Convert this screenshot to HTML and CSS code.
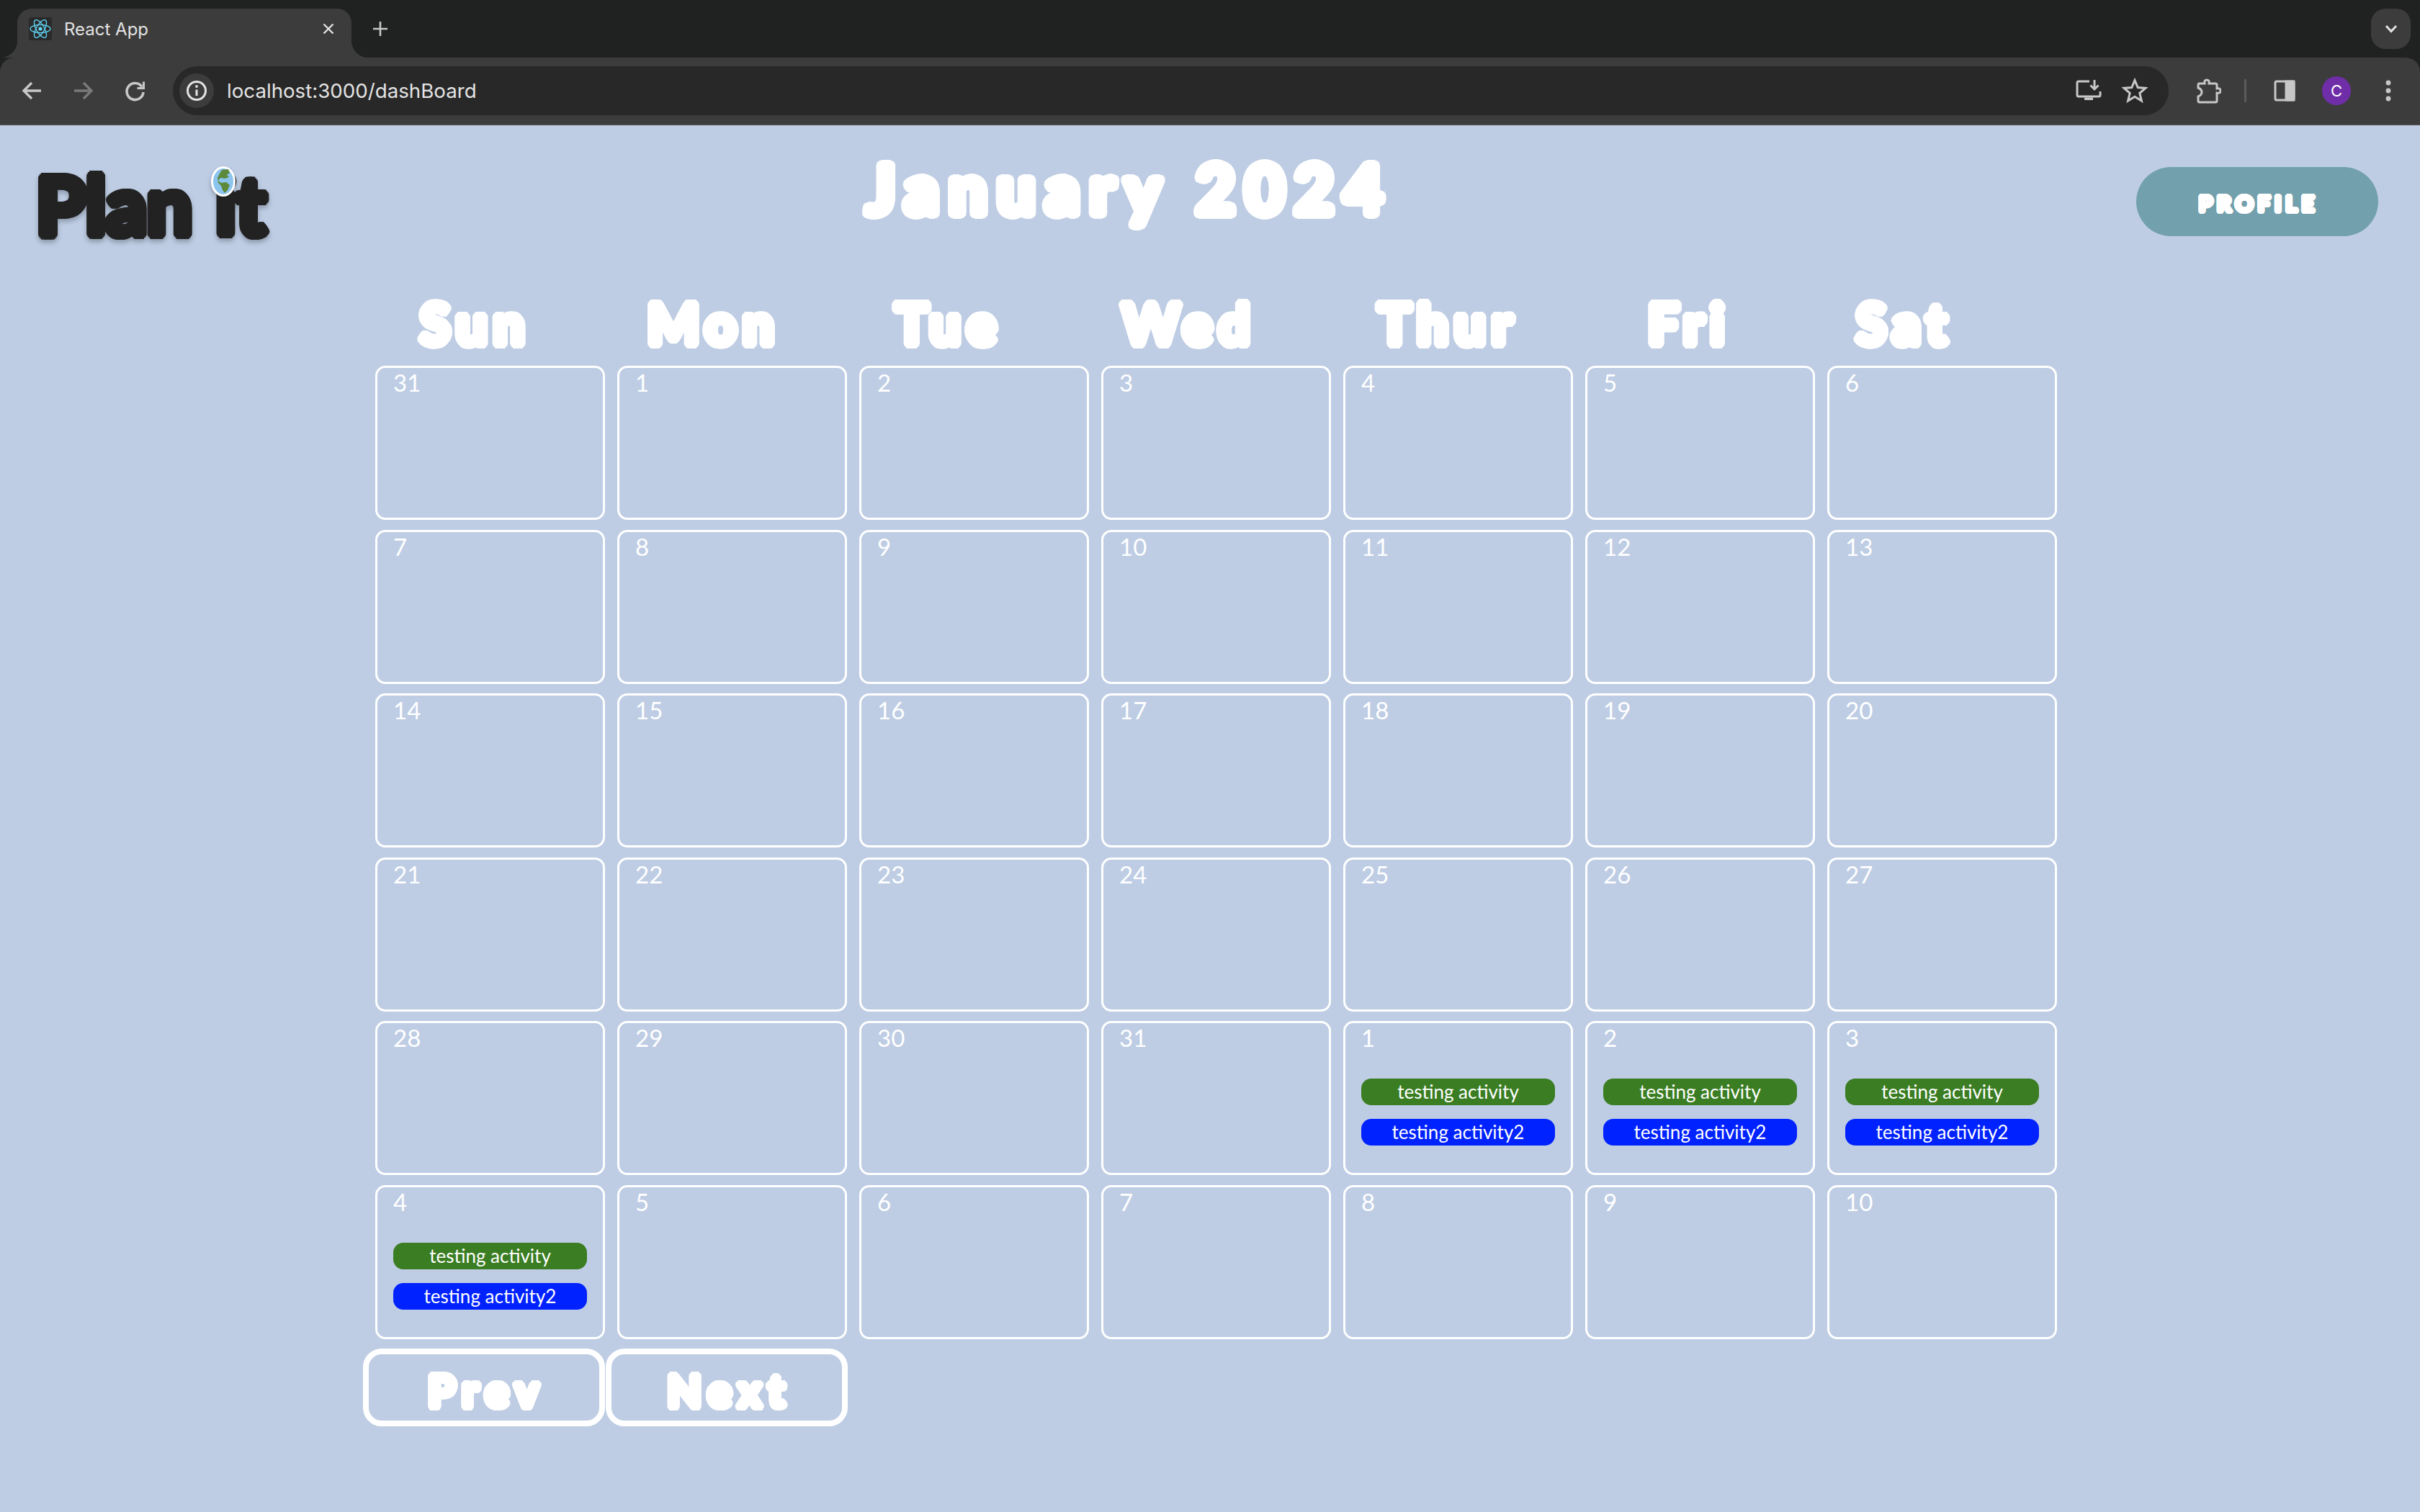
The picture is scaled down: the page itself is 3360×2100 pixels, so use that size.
FILE: index.html
```html
<!DOCTYPE html>
<html lang="en">

<head>
    <meta charset="UTF-8">
    <meta name="viewport" content="width=device-width, initial-scale=1.0">
    <title>React App</title>
    <link rel="stylesheet" href="styles.css">
</head>

<body>
    <div class="browser">
        <div class="tab-strip">
            <div class="tab">
                <span class="favicon">
                    <svg width="32" height="32" viewBox="0 0 32 32" fill="none" stroke="#61dafb" stroke-width="1.3">
                        <ellipse cx="16" cy="16" rx="14" ry="5.6"/>
                        <ellipse cx="16" cy="16" rx="14" ry="5.6" transform="rotate(60 16 16)"/>
                        <ellipse cx="16" cy="16" rx="14" ry="5.6" transform="rotate(120 16 16)"/>
                        <circle cx="16" cy="16" r="2.6" fill="#61dafb" stroke="none"/>
                    </svg>
                </span>
                <span class="tab-title">React App</span>
                <svg class="tab-close" width="16" height="16" viewBox="0 0 16 16" fill="none" stroke="#e3e3e3" stroke-width="2.4">
                    <path d="M1.5 1.5L14.5 14.5M14.5 1.5L1.5 14.5"/>
                </svg>
            </div>
            <svg class="new-tab" width="24" height="24" viewBox="0 0 24 24" fill="none" stroke="#c7c7c7" stroke-width="2.6">
                <path d="M12 2V22M2 12H22"/>
            </svg>
            <div class="tab-search">
                <svg width="20" height="14" viewBox="0 0 20 14" fill="none" stroke="#e3e3e3" stroke-width="3">
                    <path d="M3 3L10 10.5L17 3"/>
                </svg>
            </div>
        </div>
        <div class="toolbar">
            <span class="tool">
                <svg width="32" height="32" viewBox="0 0 32 32" fill="none" stroke="#c7c7c7" stroke-width="3.4">
                    <path d="M29 16H6M16 5L5 16L16 27"/>
                </svg>
            </span>
            <span class="tool">
                <svg width="32" height="32" viewBox="0 0 32 32" fill="none" stroke="#7a7a7a" stroke-width="3.4">
                    <path d="M3 16H26M16 5L27 16L16 27"/>
                </svg>
            </span>
            <span class="tool">
                <svg width="32" height="32" viewBox="0 0 32 32" fill="none" stroke="#c7c7c7" stroke-width="3.6">
                    <path d="M25 10.5A11.5 11.5 0 1 0 27 18"/>
                    <path d="M27.5 3.5V12.5H18.5" stroke-width="3"/>
                </svg>
            </span>
            <div class="omnibox">
                <span class="site-info">
                    <svg width="32" height="32" viewBox="0 0 32 32" fill="none" stroke="#e3e3e3" stroke-width="3">
                        <circle cx="16" cy="16" r="12.5"/>
                        <path d="M16 14.5V23"/>
                        <circle cx="16" cy="10" r="1.9" fill="#e3e3e3" stroke="none"/>
                    </svg>
                </span>
                <span class="url">localhost:3000/dashBoard</span>
                <span class="omni-icon">
                    <svg width="36" height="32" viewBox="0 0 36 32" fill="none" stroke="#c7c7c7" stroke-width="3">
                        <path d="M19 3H4Q2 3 2 5V22Q2 24 4 24H32Q34 24 34 22V17"/>
                        <path d="M12 25.5H24V29H12Z" fill="#c7c7c7" stroke="none"/>
                        <path d="M26 1V13M20.5 8.5L26 14L31.5 8.5"/>
                    </svg>
                </span>
                <span class="omni-icon">
                    <svg width="36" height="36" viewBox="0 0 36 36" fill="none" stroke="#c7c7c7" stroke-width="3">
                        <path d="M18 3.5L22.2 13.6L33 14.4L24.8 21.4L27.4 32L18 26.3L8.6 32L11.2 21.4L3 14.4L13.8 13.6Z"/>
                    </svg>
                </span>
            </div>
            <span class="tool puzzle">
                <svg width="36" height="36" viewBox="0 0 36 36" fill="none" stroke="#c7c7c7" stroke-width="3">
                    <path d="M4 8H13Q12 3 16 3Q20 3 19 8H28Q30 8 30 10V15Q35 14 35 18Q35 22 30 21V32Q30 34 28 34H6Q4 34 4 32V26Q9 24 9 20Q9 16 4 14V10Q4 8 6 8"/>
                </svg>
            </span>
            <span class="divider"></span>
            <span class="tool">
                <svg width="30" height="30" viewBox="0 0 30 30" fill="none" stroke="#c7c7c7" stroke-width="3">
                    <rect x="2" y="2" width="26" height="26" rx="2"/>
                    <rect x="17" y="2" width="11" height="26" fill="#c7c7c7"/>
                </svg>
            </span>
            <span class="tool">
                <span class="avatar">C</span>
            </span>
            <span class="tool">
                <svg width="8" height="30" viewBox="0 0 8 30" fill="#c7c7c7">
                    <circle cx="4" cy="4" r="3.4"/>
                    <circle cx="4" cy="15" r="3.4"/>
                    <circle cx="4" cy="26" r="3.4"/>
                </svg>
            </span>
        </div>
    </div>

    <div class="page">
        <div class="top-bar">
            <div class="logo bubble">
                Plan it
                <svg class="globe" width="34" height="42" viewBox="0 0 34 42">
                    <ellipse cx="17" cy="21" rx="15.5" ry="19.5" fill="#8cc4ee" stroke="#fff" stroke-width="3"/>
                    <path d="M15 5L24 4L26 9L22 12L25 15L19 17L13 16L10 20L14 23L21 22L26 26L23 33L19 37L16 33L14 27L10 23L9 16L12 10Z" fill="#5d8a3a"/>
                </svg>
            </div>
            <h1 class="month-title bubble">January 2024</h1>
            <button class="profile-btn bubble">PROFILE</button>
        </div>

        <div class="calendar">
            <div class="weekdays bubble">
                <span>Sun</span>
                <span>Mon</span>
                <span>Tue</span>
                <span>Wed</span>
                <span>Thur</span>
                <span>Fri</span>
                <span>Sat</span>
            </div>

            <div class="days">
                <div class="day"><span class="day-num">31</span></div>
                <div class="day"><span class="day-num">1</span></div>
                <div class="day"><span class="day-num">2</span></div>
                <div class="day"><span class="day-num">3</span></div>
                <div class="day"><span class="day-num">4</span></div>
                <div class="day"><span class="day-num">5</span></div>
                <div class="day"><span class="day-num">6</span></div>

                <div class="day"><span class="day-num">7</span></div>
                <div class="day"><span class="day-num">8</span></div>
                <div class="day"><span class="day-num">9</span></div>
                <div class="day"><span class="day-num">10</span></div>
                <div class="day"><span class="day-num">11</span></div>
                <div class="day"><span class="day-num">12</span></div>
                <div class="day"><span class="day-num">13</span></div>

                <div class="day"><span class="day-num">14</span></div>
                <div class="day"><span class="day-num">15</span></div>
                <div class="day"><span class="day-num">16</span></div>
                <div class="day"><span class="day-num">17</span></div>
                <div class="day"><span class="day-num">18</span></div>
                <div class="day"><span class="day-num">19</span></div>
                <div class="day"><span class="day-num">20</span></div>

                <div class="day"><span class="day-num">21</span></div>
                <div class="day"><span class="day-num">22</span></div>
                <div class="day"><span class="day-num">23</span></div>
                <div class="day"><span class="day-num">24</span></div>
                <div class="day"><span class="day-num">25</span></div>
                <div class="day"><span class="day-num">26</span></div>
                <div class="day"><span class="day-num">27</span></div>

                <div class="day"><span class="day-num">28</span></div>
                <div class="day"><span class="day-num">29</span></div>
                <div class="day"><span class="day-num">30</span></div>
                <div class="day"><span class="day-num">31</span></div>
                <div class="day">
                    <span class="day-num">1</span>
                    <div class="activity green">testing activity</div>
                    <div class="activity blue">testing activity2</div>
                </div>
                <div class="day">
                    <span class="day-num">2</span>
                    <div class="activity green">testing activity</div>
                    <div class="activity blue">testing activity2</div>
                </div>
                <div class="day">
                    <span class="day-num">3</span>
                    <div class="activity green">testing activity</div>
                    <div class="activity blue">testing activity2</div>
                </div>

                <div class="day">
                    <span class="day-num">4</span>
                    <div class="activity green">testing activity</div>
                    <div class="activity blue">testing activity2</div>
                </div>
                <div class="day"><span class="day-num">5</span></div>
                <div class="day"><span class="day-num">6</span></div>
                <div class="day"><span class="day-num">7</span></div>
                <div class="day"><span class="day-num">8</span></div>
                <div class="day"><span class="day-num">9</span></div>
                <div class="day"><span class="day-num">10</span></div>
            </div>

            <div class="month-nav">
                <button class="nav-btn bubble">Prev</button>
                <button class="nav-btn bubble">Next</button>
            </div>
        </div>
    </div>
</body>

</html>
```

FILE: styles.css
```css
body {
    margin: 0;
    height: 2100px;
    overflow: hidden;
    background-color: #becde4;
    font-family: "Lato", sans-serif;
    color: white;
}

/* browser chrome */

.browser {
    background-color: #202221;
    font-family: "Inter", sans-serif;
}

.tab-strip {
    display: flex;
    align-items: flex-start;
    height: 80px;
}

.tab {
    position: relative;
    display: flex;
    align-items: center;
    box-sizing: border-box;
    width: 464px;
    height: 68px;
    margin: 12px 0 0 24px;
    padding: 0 24px 12px 16px;
    background-color: #3c3c3c;
    border-radius: 20px 20px 0 0;
}

.tab::before,
.tab::after {
    content: "";
    position: absolute;
    bottom: 0;
    width: 24px;
    height: 24px;
}

.tab::before {
    left: -24px;
    background: radial-gradient(circle at 0 0, transparent 24px, #3c3c3c 24.5px);
}

.tab::after {
    right: -24px;
    background: radial-gradient(circle at 100% 0, transparent 24px, #3c3c3c 24.5px);
}

.favicon {
    display: flex;
    justify-content: center;
    align-items: center;
    width: 32px;
    height: 32px;
    background-color: #2a2a2a;
    border-radius: 3px;
}

.tab-title {
    flex: 1;
    margin-left: 17px;
    font-size: 24px;
    color: #e3e3e3;
}

.new-tab {
    margin: 28px 0 0 28px;
}

.tab-search {
    display: flex;
    justify-content: center;
    align-items: center;
    width: 55px;
    height: 56px;
    margin: 12px 13px 0 auto;
    background-color: #3c3c3c;
    border-radius: 20px;
}

.toolbar {
    display: flex;
    align-items: center;
    box-sizing: border-box;
    height: 94px;
    padding: 0 8px;
    background-color: #3c3c3c;
    border-bottom: 2px solid #474747;
    border-radius: 20px 20px 0 0;
}

.tool {
    display: flex;
    justify-content: center;
    align-items: center;
    width: 72px;
    height: 72px;
}

.omnibox {
    flex: 1;
    display: flex;
    align-items: center;
    height: 68px;
    margin: 0 19px 0 16px;
    padding: 0 15px 0 9px;
    background-color: #282828;
    border-radius: 34px;
}

.site-info {
    display: flex;
    justify-content: center;
    align-items: center;
    width: 48px;
    height: 48px;
    background-color: #3c3c3c;
    border-radius: 50%;
}

.url {
    flex: 1;
    margin-left: 18px;
    font-size: 27.7px;
    color: #e3e3e3;
}

.omni-icon {
    display: flex;
    justify-content: center;
    align-items: center;
    width: 64px;
    height: 64px;
}

.divider {
    width: 3px;
    height: 32px;
    margin: 0 17px 0 14px;
    background-color: #5a5a5a;
}

.avatar {
    display: flex;
    justify-content: center;
    align-items: center;
    width: 40px;
    height: 40px;
    background-color: #6f2da8;
    border-radius: 50%;
    font-size: 22px;
}

/* page */

/* fattens the glyphs with round corners, the display font is not installed */
.bubble {
    font-weight: 700;
    text-shadow:
        var(--r) 0, calc(var(--r) * -1) 0, 0 var(--r), 0 calc(var(--r) * -1),
        calc(var(--r) * 0.7) calc(var(--r) * 0.7), calc(var(--r) * -0.7) calc(var(--r) * 0.7),
        calc(var(--r) * 0.7) calc(var(--r) * -0.7), calc(var(--r) * -0.7) calc(var(--r) * -0.7),
        calc(var(--r) * 0.92) calc(var(--r) * 0.38), calc(var(--r) * -0.92) calc(var(--r) * 0.38),
        calc(var(--r) * 0.92) calc(var(--r) * -0.38), calc(var(--r) * -0.92) calc(var(--r) * -0.38),
        calc(var(--r) * 0.38) calc(var(--r) * 0.92), calc(var(--r) * -0.38) calc(var(--r) * 0.92),
        calc(var(--r) * 0.38) calc(var(--r) * -0.92), calc(var(--r) * -0.38) calc(var(--r) * -0.92);
}

.top-bar {
    display: flex;
    align-items: flex-start;
    height: 226px;
    padding: 0 58px 0 50px;
}

.logo {
    --r: 6px;
    position: relative;
    width: 332px;
    margin-top: 44px;
    font-size: 112px;
    line-height: 130px;
    word-spacing: 5px;
    color: #222;
    filter: drop-shadow(0 4px 3px rgba(0, 0, 0, 0.25));
    white-space: nowrap;
}

.globe {
    position: absolute;
    top: 13px;
    left: 243px;
}

.month-title {
    --r: 7px;
    margin: 22px 0 0 821px;
    font-size: 93px;
    line-height: 130px;
    letter-spacing: 14.5px;
    white-space: nowrap;
}

.profile-btn {
    --r: 3px;
    width: 336px;
    height: 96px;
    margin: 58px 0 0 auto;
    padding: 4px 0 0 4px;
    border: none;
    border-radius: 48px;
    background-color: #72a0ac;
    color: white;
    font-family: "Lato", sans-serif;
    font-size: 31px;
    letter-spacing: 6px;
}

.calendar {
    width: 2351px;
    margin-left: 504px;
}

.weekdays {
    --r: 6px;
    display: grid;
    grid-template-columns: 154px 178px 157px 183px 216px 129px 145px;
    column-gap: 162px;
    height: 108px;
    padding-left: 79px;
    font-size: 76px;
    line-height: 98px;
    letter-spacing: 9px;
    text-align: center;
}

.days {
    display: grid;
    grid-template-columns: repeat(7, 319px);
    grid-auto-rows: 214px;
    gap: 13.5px 17px;
    padding-left: 17px;
}

.day {
    box-sizing: border-box;
    padding: 0 22px;
    border: 3px solid white;
    border-radius: 14px;
}

.day-num {
    display: block;
    height: 77px;
    font-size: 33px;
    line-height: 40px;
}

.activity {
    height: 37px;
    margin-bottom: 19px;
    border-radius: 14px;
    font-size: 26px;
    line-height: 37px;
    text-align: center;
}

.green {
    background-color: #3a7d22;
}

.blue {
    background-color: #0022ff;
}

.month-nav {
    display: flex;
    margin-top: 13px;
}

.nav-btn {
    --r: 5px;
    box-sizing: border-box;
    width: 336px;
    height: 108px;
    margin-right: 1px;
    padding: 8px 0 0 8px;
    background: none;
    border: 8px solid white;
    border-radius: 26px;
    color: white;
    font-family: "Lato", sans-serif;
    font-size: 61px;
    letter-spacing: 10px;
}
```
